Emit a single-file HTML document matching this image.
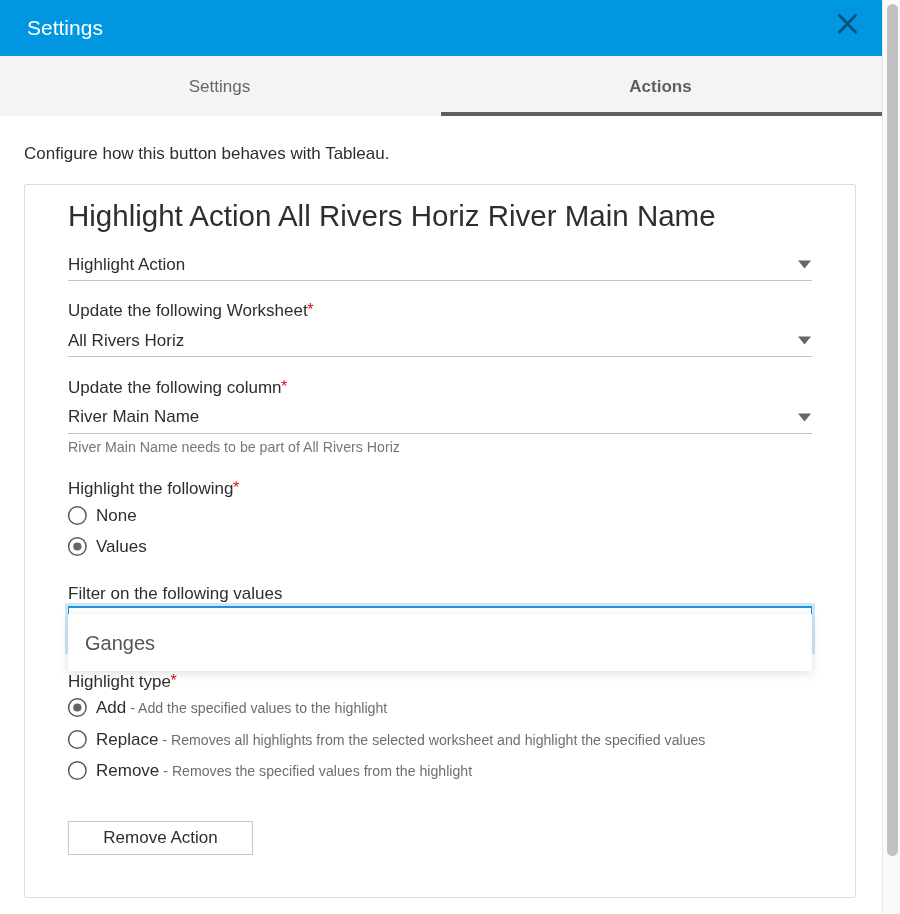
<!DOCTYPE html>
<html><head><meta charset="utf-8"><style>
html,body{margin:0;padding:0;width:900px;height:914px;overflow:hidden;background:#fff;position:relative}
.t{position:absolute;white-space:nowrap;line-height:1;will-change:transform;font-family:"Liberation Sans",sans-serif}
</style></head><body>
<div style="position:absolute;left:0;top:0;width:882px;height:56px;background:#0097e0"></div>
<div class="t" style="left:27px;top:17.22px;font-size:21px;color:#fff;font-weight:400;">Settings</div>
<svg style="position:absolute;left:830px;top:6px" width="36" height="36" viewBox="0 0 36 36"><path d="M9.35 9.3 L25.65 26.3 M25.65 9.3 L9.35 26.3" stroke="#0a4f7c" stroke-width="2.7" stroke-linecap="round"/></svg>
<div style="position:absolute;left:0;top:56px;width:882px;height:60px;background:#f4f4f4"></div>
<div style="position:absolute;left:441px;top:112px;width:441px;height:4px;background:#5f5f5f"></div>
<div class="t" style="left:-1px;width:441px;text-align:center;top:77.81px;font-size:17px;color:#666;font-weight:400">Settings</div>
<div class="t" style="left:440px;width:441px;text-align:center;top:77.91px;font-size:17px;color:#5e5e5e;font-weight:700">Actions</div>
<div class="t" style="left:24px;top:145.01px;font-size:17px;color:#2e2e2e;font-weight:400;">Configure how this button behaves with Tableau.</div>
<div style="position:absolute;left:24px;top:184px;width:830px;height:712px;border:1px solid #dcdcdc;border-radius:2px"></div>
<div class="t" style="left:67.5px;top:200.83px;font-size:29.5px;color:#2e2e2e;font-weight:400;">Highlight Action All Rivers Horiz River Main Name</div>
<div class="t" style="left:68px;top:255.91px;font-size:17px;color:#2e2e2e;font-weight:400;">Highlight Action</div>
<div style="position:absolute;left:68px;top:280px;width:744px;height:1px;background:#c2c2c2"></div>
<svg style="position:absolute;left:797px;top:259.5px" width="15" height="9" viewBox="0 0 15 9"><path d="M1 0.5 H14 L7.5 8.5 Z" fill="#666"/></svg>
<div class="t" style="left:68px;top:302.31px;font-size:17px;color:#2e2e2e;font-weight:400;">Update the following Worksheet<span style="color:#df0a1e;font-size:16px;position:relative;top:-1.5px;margin-left:-0.5px">*</span></div>
<div class="t" style="left:68px;top:331.61px;font-size:17px;color:#2e2e2e;font-weight:400;">All Rivers Horiz</div>
<div style="position:absolute;left:68px;top:356px;width:744px;height:1px;background:#c2c2c2"></div>
<svg style="position:absolute;left:797px;top:335.8px" width="15" height="9" viewBox="0 0 15 9"><path d="M1 0.5 H14 L7.5 8.5 Z" fill="#666"/></svg>
<div class="t" style="left:68px;top:378.81px;font-size:17px;color:#2e2e2e;font-weight:400;">Update the following column<span style="color:#df0a1e;font-size:16px;position:relative;top:-1.5px;margin-left:-0.5px">*</span></div>
<div class="t" style="left:68px;top:408.21px;font-size:17px;color:#2e2e2e;font-weight:400;">River Main Name</div>
<div style="position:absolute;left:68px;top:432.5px;width:744px;height:1px;background:#c2c2c2"></div>
<svg style="position:absolute;left:797px;top:412.5px" width="15" height="9" viewBox="0 0 15 9"><path d="M1 0.5 H14 L7.5 8.5 Z" fill="#666"/></svg>
<div class="t" style="left:68px;top:439.78px;font-size:14.2px;color:#777;font-weight:400;">River Main Name needs to be part of All Rivers Horiz</div>
<div class="t" style="left:68px;top:480.41px;font-size:17px;color:#2e2e2e;font-weight:400;">Highlight the following<span style="color:#df0a1e;font-size:16px;position:relative;top:-1.5px;margin-left:-0.5px">*</span></div>
<svg style="position:absolute;left:66px;top:504.20px" width="23" height="23" viewBox="0 0 23 23"><circle cx="11.35" cy="11.5" r="8.75" fill="none" stroke="#5a5a5a" stroke-width="1.5"/></svg>
<div class="t" style="left:96px;top:506.51px;font-size:17px;color:#2e2e2e;font-weight:400;">None</div>
<svg style="position:absolute;left:66px;top:535.30px" width="23" height="23" viewBox="0 0 23 23"><circle cx="11.35" cy="11.5" r="8.75" fill="none" stroke="#5a5a5a" stroke-width="1.5"/><circle cx="11.35" cy="11.5" r="4.1" fill="#666"/></svg>
<div class="t" style="left:96px;top:537.61px;font-size:17px;color:#2e2e2e;font-weight:400;">Values</div>
<div class="t" style="left:68px;top:585.01px;font-size:17px;color:#2e2e2e;font-weight:400;">Filter on the following values</div>
<div style="position:absolute;left:68px;top:606px;width:742px;height:42px;border:1px solid #1f93dc;border-top-width:2px;box-shadow:0 0 0 3px #cfe6f7"></div>
<div style="position:absolute;left:68px;top:614px;width:744px;height:57px;background:#fff;box-shadow:0 2px 10px rgba(0,0,0,0.13)"></div>
<div class="t" style="left:84.5px;top:632.77px;font-size:20px;color:#555;font-weight:400;">Ganges</div>
<div class="t" style="left:68px;top:672.51px;font-size:17px;color:#2e2e2e;font-weight:400;">Highlight type<span style="color:#df0a1e;font-size:16px;position:relative;top:-1.5px;margin-left:-0.5px">*</span></div>
<svg style="position:absolute;left:66px;top:696.20px" width="23" height="23" viewBox="0 0 23 23"><circle cx="11.35" cy="11.5" r="8.75" fill="none" stroke="#5a5a5a" stroke-width="1.5"/><circle cx="11.35" cy="11.5" r="4.1" fill="#666"/></svg>
<div class="t" style="left:96px;top:698.81px;font-size:17px;color:#2e2e2e;font-weight:400;">Add<span style="font-size:14.15px;color:#6e6e6e"> - Add the specified values to the highlight</span></div>
<svg style="position:absolute;left:66px;top:727.70px" width="23" height="23" viewBox="0 0 23 23"><circle cx="11.35" cy="11.5" r="8.75" fill="none" stroke="#5a5a5a" stroke-width="1.5"/></svg>
<div class="t" style="left:96px;top:730.61px;font-size:17px;color:#2e2e2e;font-weight:400;">Replace<span style="font-size:14.15px;color:#6e6e6e"> - Removes all highlights from the selected worksheet and highlight the specified values</span></div>
<svg style="position:absolute;left:66px;top:758.70px" width="23" height="23" viewBox="0 0 23 23"><circle cx="11.35" cy="11.5" r="8.75" fill="none" stroke="#5a5a5a" stroke-width="1.5"/></svg>
<div class="t" style="left:96px;top:761.71px;font-size:17px;color:#2e2e2e;font-weight:400;">Remove<span style="font-size:14.15px;color:#6e6e6e"> - Removes the specified values from the highlight</span></div>
<div style="position:absolute;left:68px;top:821px;width:183px;height:32px;border:1px solid #c8c8c8;background:#fff"></div>
<div class="t" style="left:68px;width:185px;text-align:center;top:828.91px;font-size:17px;color:#2e2e2e;font-weight:400">Remove Action</div>
<div style="position:absolute;left:882px;top:0;width:18px;height:914px;background:#fafafa;border-left:1px solid #e8e8e8;box-sizing:border-box"></div>
<div style="position:absolute;left:887px;top:4px;width:11.2px;height:852px;background:#c1c1c1;border-radius:6px"></div>
</body></html>
